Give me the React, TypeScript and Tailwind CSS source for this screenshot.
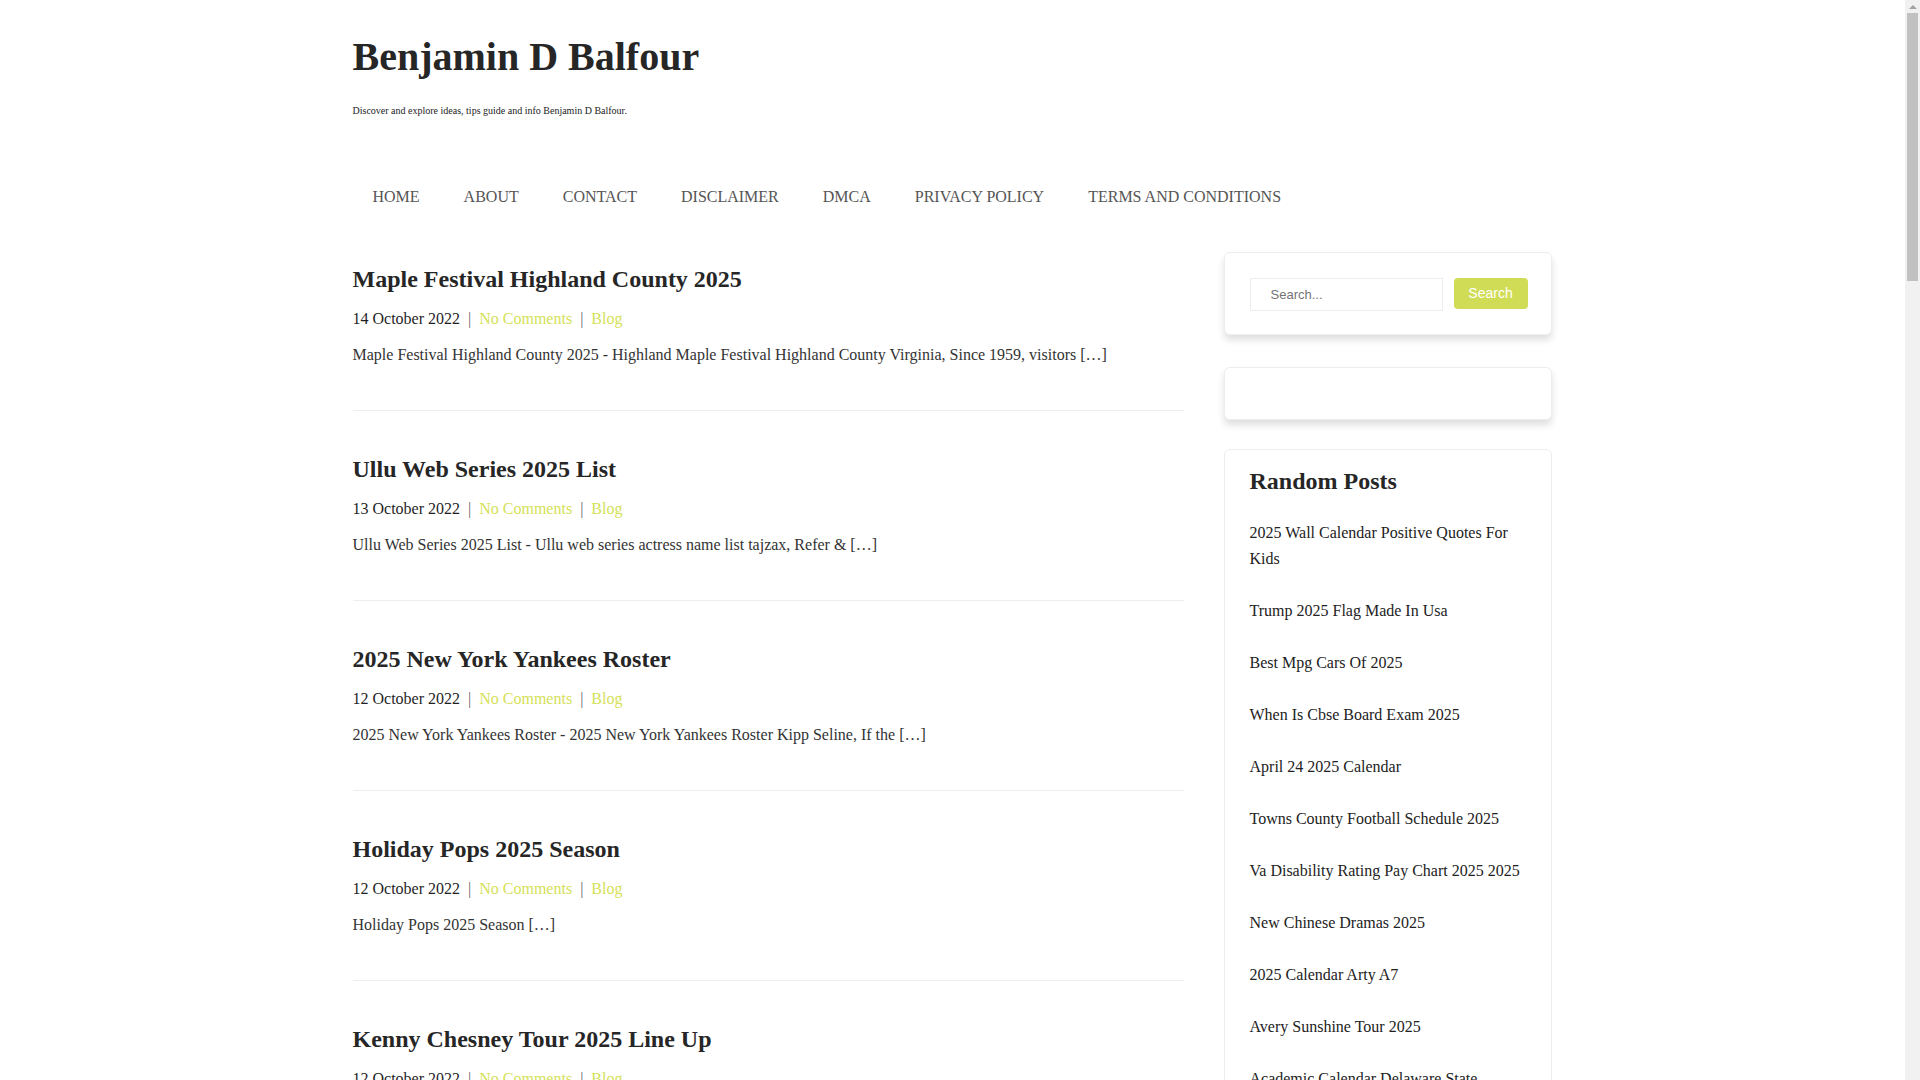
const NAV = [
  "Home",
  "About",
  "Contact",
  "Disclaimer",
  "DMCA",
  "Privacy Policy",
  "Terms and Conditions",
];

const POSTS = [
  {
    title: "Maple Festival Highland County 2025",
    date: "14 October 2022",
    excerpt:
      "Maple Festival Highland County 2025 - Highland Maple Festival Highland County Virginia, Since 1959, visitors […]",
  },
  {
    title: "Ullu Web Series 2025 List",
    date: "13 October 2022",
    excerpt:
      "Ullu Web Series 2025 List - Ullu web series actress name list tajzax, Refer & […]",
  },
  {
    title: "2025 New York Yankees Roster",
    date: "12 October 2022",
    excerpt:
      "2025 New York Yankees Roster - 2025 New York Yankees Roster Kipp Seline, If the […]",
  },
  {
    title: "Holiday Pops 2025 Season",
    date: "12 October 2022",
    excerpt: "Holiday Pops 2025 Season […]",
  },
  {
    title: "Kenny Chesney Tour 2025 Line Up",
    date: "12 October 2022",
    excerpt:
      "Kenny Chesney Tour 2025 Line Up - Kenny Chesney announces 2025 tour dates with special guests […]",
  },
  {
    title: "Ukg Holidays 2025",
    date: "11 October 2022",
    excerpt: "Ukg Holidays 2025 […]",
  },
];

const RANDOM = [
  "2025 Wall Calendar Positive Quotes For Kids",
  "Trump 2025 Flag Made In Usa",
  "Best Mpg Cars Of 2025",
  "When Is Cbse Board Exam 2025",
  "April 24 2025 Calendar",
  "Towns County Football Schedule 2025",
  "Va Disability Rating Pay Chart 2025 2025",
  "New Chinese Dramas 2025",
  "2025 Calendar Arty A7",
  "Avery Sunshine Tour 2025",
  "Academic Calendar Delaware State University 2025",
  "Nfl Draft 2025 Mock",
];

const serif = "font-['Liberation_Serif','Times_New_Roman',serif]";
const sans = "font-['Liberation_Sans',Arial,sans-serif]";

function PostItem({ post }: { post: (typeof POSTS)[number] }) {
  return (
    <article className="pt-[44px] first:pt-[13px] pb-[43px] border-b border-[#eeeeee]">
      <h2 className="text-[24px] leading-[29px] font-bold text-[#262626]">
        {post.title}
      </h2>
      <div className="mt-[13px] text-[16px] leading-6 text-[#1f1f1f]">
        {post.date}
        <span className="px-[8px] text-[#666]">|</span>
        <a className="text-[#d4e157]">No Comments</a>
        <span className="px-[8px] text-[#666]">|</span>
        <a className="text-[#d4e157]">Blog</a>
      </div>
      <p className="mt-[12px] text-[16px] leading-6 text-[#333]">
        {post.excerpt}
      </p>
    </article>
  );
}

export default function App() {
  return (
    <div className="flex h-screen bg-white">
      <div className={`${serif} flex-1 h-screen overflow-y-auto`}>
        <div className="mx-auto max-w-[1200px]">
          {/* Header */}
          <header className="pt-[33px]">
            <h1 className="text-[40px] leading-[48px] font-bold text-[#262626]">
              Benjamin D Balfour
            </h1>
            <p className="mt-[22px] text-[10px] leading-[15px] text-[#222]">
              Discover and explore ideas, tips guide and info Benjamin D Balfour.
            </p>
          </header>

          {/* Nav */}
          <nav className="mt-[67px] flex gap-1">
            {NAV.map((n) => (
              <a
                key={n}
                className="px-5 text-[16px] leading-6 uppercase text-[#555]"
              >
                {n}
              </a>
            ))}
          </nav>

          {/* Body */}
          <div className="mt-[43px] flex gap-10 items-start">
            <main className="w-[831px]">
              {POSTS.map((p) => (
                <PostItem key={p.title} post={p} />
              ))}
            </main>

            <aside className="w-[328px] flex flex-col">
              <div className="rounded-md border border-[#eeeeee] bg-white pt-[25px] pb-[23px] pl-[25px] pr-[23px] shadow-[0_5px_7px_rgba(0,0,0,0.13)] mb-[32px]">
                <form className={`${sans} flex items-start gap-[11px]`}>
                  <input
                    placeholder="Search..."
                    className="w-[193px] h-[33px] border border-[#eeeeee] pl-[20px] text-[13px] text-[#333] placeholder:text-[#757575] outline-none"
                  />
                  <button
                    type="button"
                    className="w-[74px] h-[31px] rounded-[4px] bg-[#d1dc56] text-white text-[14px]"
                  >
                    Search
                  </button>
                </form>
              </div>

              <div className="h-[53px] rounded-md border border-[#eeeeee] bg-white shadow-[0_5px_7px_rgba(0,0,0,0.13)] mb-[29px]" />

              <div className="rounded-md border border-[#eeeeee] bg-white pt-[17px] pb-[30px] px-[25px]">
                <h3 className="text-[24px] leading-[29px] font-bold text-[#262626]">
                  Random Posts
                </h3>
                <ul className="mt-[24px] flex flex-col gap-[26px]">
                  {RANDOM.map((r) => (
                    <li key={r} className="text-[16px] leading-[26px] text-[#222]">
                      <a>{r}</a>
                    </li>
                  ))}
                </ul>
              </div>
            </aside>
          </div>
        </div>
      </div>

      {/* window scrollbar */}
      <div className="w-[15px] h-screen bg-[#f1f1f1] flex flex-col items-center pt-[5px] gap-[4px]">
        <div className="w-0 h-0 border-x-[4px] border-x-transparent border-b-[4px] border-b-[#a3a3a3]" />
        <div className="w-[11px] h-[268px] bg-[#c1c1c1]" />
      </div>
    </div>
  );
}
